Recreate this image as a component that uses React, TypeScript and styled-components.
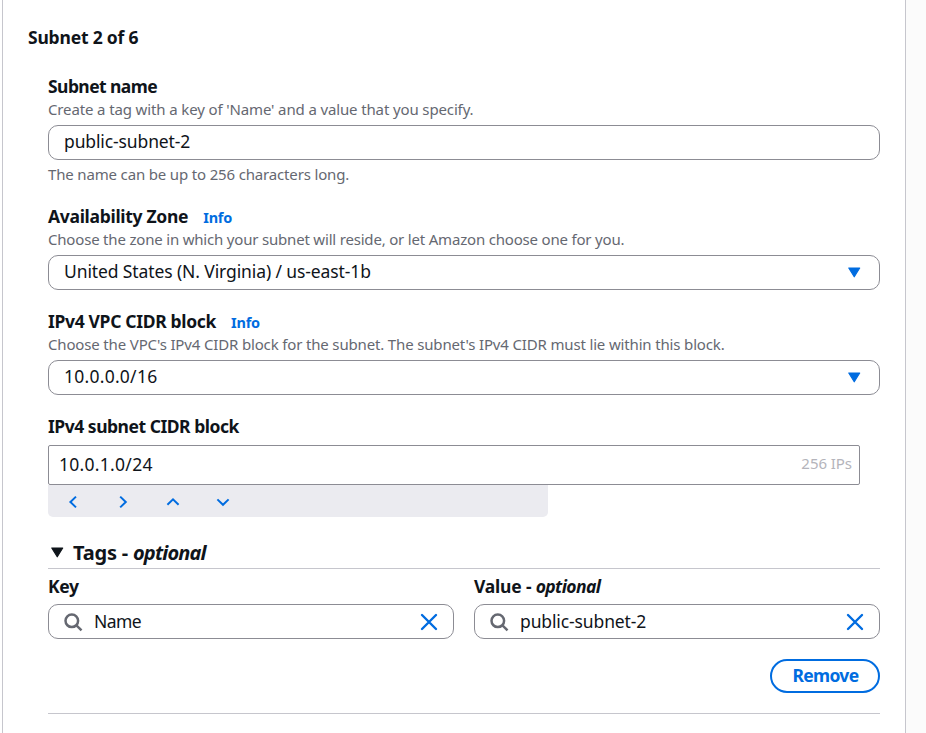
import React from 'react';
import styled, { createGlobalStyle, css } from 'styled-components';

const color = {
  text: '#0f141a',
  muted: '#656871',
  link: '#006ce0',
  control: '#8c8c94',
  divider: '#c6c6cd',
  bar: '#ebebf0',
  hint: '#b4b4bb',
};

const GlobalStyle = createGlobalStyle`
  * { box-sizing: border-box; }
  html, body { margin: 0; background: #fbfbfb; overflow: hidden; }
  body {
    font-family: "Noto Sans", "Open Sans", sans-serif;
    font-size: 17.5px;
    color: ${color.text};
  }
`;

const Panel = styled.main`
  width: 906px;
  height: 733px;
  background: #fff;
  border-right: 1px solid ${color.divider};
  padding-left: 2px;
  display: flex;
`;

const PanelBody = styled.div`
  flex: 1;
  border-left: 1px solid ${color.divider};
  padding: 25px 25px 0 25px;
`;

const Fields = styled.div`
  padding: 24px 0 0 20px;
`;

type Spaced = { $ls?: number };
const spacing = css<Spaced>`letter-spacing: ${p => p.$ls ?? 0}px;`;

const Title = styled.h2<Spaced>`
  margin: 0;
  font-size: 17.5px;
  line-height: 25px;
  font-weight: 660;
  ${spacing}
`;

const Field = styled.section<{ $gap: number }>`
  display: flex;
  flex-direction: column;
  margin-bottom: ${p => p.$gap}px;
`;

const LabelRow = styled.div`
  display: flex;
  align-items: center;
  gap: 15px;
  height: 25px;
`;

const Label = styled.label<Spaced>`
  font-weight: 660;
  line-height: 25px;
  white-space: pre;
  ${spacing}
`;

const InfoLink = styled.a`
  font-size: 14.5px;
  line-height: 20px;
  font-weight: 660;
  letter-spacing: -0.2px;
  color: ${color.link};
`;

const Help = styled.p<Spaced>`
  margin: 0;
  font-size: 15px;
  line-height: 20px;
  height: 20px;
  color: ${color.muted};
  white-space: nowrap;
  ${spacing}
`;

const Control = styled.div<Spaced & { $top?: number }>`
  display: flex;
  align-items: center;
  height: 35px;
  margin-top: ${p => p.$top ?? 6}px;
  padding: 0 15px;
  border: 1px solid ${color.control};
  border-radius: 10px;
  line-height: 25px;
  ${spacing}
`;

const ControlText = styled.span<{ $lift?: number }>`
  flex: 1;
  margin-top: -${p => p.$lift ?? 3}px;
`;

const NameHelp = styled.div`
  padding-top: 4px;
`;

const CidrInput = styled.div`
  display: flex;
  align-items: center;
  justify-content: space-between;
  width: 812px;
  height: 40px;
  margin-top: 6px;
  padding: 0 7px 2px 10px;
  border: 1px solid ${color.control};
  border-radius: 2px;
  letter-spacing: 0.28px;
`;

const IpCount = styled.span`
  font-size: 15px;
  letter-spacing: -0.05px;
  color: ${color.hint};
  margin-top: -3px;
`;

const StepBar = styled.div`
  display: flex;
  width: 500px;
  height: 32px;
  background: ${color.bar};
  border-radius: 0 0 5px 5px;
`;

const StepButton = styled.button`
  display: flex;
  align-items: center;
  justify-content: center;
  width: 50px;
  height: 33px;
  padding: 0;
  border: 0;
  background: none;
  color: ${color.link};
`;

const TagsHeader = styled.h3`
  display: flex;
  align-items: center;
  margin: 0;
  height: 34px;
  padding: 2px 0 0 3px;
  border-bottom: 1px solid ${color.divider};
  font-size: 20px;
  line-height: 25px;
  font-weight: 660;
  white-space: pre;
  letter-spacing: -0.2px;
`;

const Caret = styled.svg<{ $gap?: number }>`
  width: 13px;
  height: 11px;
  flex: none;
  margin-right: ${p => p.$gap ?? 0}px;
`;

const Optional = styled.em<Spaced>`
  font-style: italic;
  ${spacing}
`;

const TagGrid = styled.div`
  display: grid;
  grid-template-columns: 1fr 1fr;
  gap: 20px;
  padding-top: 5px;
`;

const Icon = styled.svg<{ $mr?: number }>`
  width: 20px;
  height: 20px;
  flex: none;
  fill: none;
  margin-right: ${p => p.$mr ?? 0}px;
`;

const Footer = styled.div`
  display: flex;
  justify-content: flex-end;
  padding: 20px 0;
  border-bottom: 1px solid ${color.divider};
`;

const RemoveButton = styled.button`
  width: 110px;
  height: 34px;
  padding: 0 0 1px 1px;
  border: 2px solid ${color.link};
  border-radius: 17px;
  background: #fff;
  color: ${color.link};
  font: 660 17.5px/25px "Noto Sans", sans-serif;
  letter-spacing: -0.7px;
`;

const DownCaret = ({ fill, gap }: { fill: string; gap?: number }) => (
  <Caret $gap={gap} viewBox="0 0 13 11">
    <path d="M.8 1h10.9L6.25 9.8z" fill={fill} stroke={fill} strokeWidth="1.2" strokeLinejoin="round" />
  </Caret>
);

const SearchIcon = () => (
  <Icon $mr={10} viewBox="0 0 20 20" stroke={color.muted} strokeWidth="2.5">
    <circle cx="7.8" cy="8.8" r="6.3" />
    <path d="M12.2 13.2l5.3 5.1" />
  </Icon>
);

const ClearIcon = () => (
  <Icon viewBox="0 0 20 20" stroke={color.link} strokeWidth="2.4" strokeLinecap="round">
    <path d="M4 3l14 14M18 3L4 17" />
  </Icon>
);

const steps = [
  { label: 'Previous', d: 'M13 4.6L7.4 10l5.6 5.4' },
  { label: 'Next', d: 'M7.2 4.6l5.6 5.4-5.6 5.4' },
  { label: 'Increase', d: 'M4.4 12.8L10 7.4l5.6 5.4' },
  { label: 'Decrease', d: 'M4.4 7.4L10 12.8l5.6-5.4' },
];

const SearchField = ({ value, ls }: { value: string; ls: number }) => (
  <Control $top={5} $ls={ls}>
    <SearchIcon />
    <ControlText $lift={1}>{value}</ControlText>
    <ClearIcon />
  </Control>
);

const Select = ({ value, ls }: { value: string; ls?: number }) => (
  <Control $ls={ls}>
    <ControlText>{value}</ControlText>
    <DownCaret fill={color.link} gap={3} />
  </Control>
);

export default function App() {
  return (
    <>
      <GlobalStyle />
      <Panel>
        <PanelBody>
          <Title $ls={-0.2}>Subnet 2 of 6</Title>
          <Fields>
            <Field $gap={20}>
              <LabelRow><Label $ls={-0.57}>Subnet name</Label></LabelRow>
              <Help $ls={-0.13}>Create a tag with a key of 'Name' and a value that you specify.</Help>
              <Control $ls={-0.12}><ControlText>public-subnet-2</ControlText></Control>
              <NameHelp><Help $ls={-0.16}>The name can be up to 256 characters long.</Help></NameHelp>
            </Field>
            <Field $gap={19}>
              <LabelRow><Label $ls={-0.3}>Availability Zone</Label><InfoLink>Info</InfoLink></LabelRow>
              <Help $ls={-0.19}>Choose the zone in which your subnet will reside, or let Amazon choose one for you.</Help>
              <Select value="United States (N. Virginia) / us-east-1b" ls={-0.11} />
            </Field>
            <Field $gap={19}>
              <LabelRow><Label $ls={-0.33}>IPv4 VPC CIDR block</Label><InfoLink>Info</InfoLink></LabelRow>
              <Help $ls={-0.155}>Choose the VPC's IPv4 CIDR block for the subnet. The subnet's IPv4 CIDR must lie within this block.</Help>
              <Select value="10.0.0.0/16" ls={0.25} />
            </Field>
            <Field $gap={18}>
              <LabelRow><Label $ls={-0.48}>IPv4 subnet CIDR block</Label></LabelRow>
              <CidrInput><span>10.0.1.0/24</span><IpCount>256 IPs</IpCount></CidrInput>
              <StepBar>
                {steps.map(s => (
                  <StepButton key={s.label} aria-label={s.label}>
                    <Icon viewBox="0 0 20 20" stroke="currentColor" strokeWidth="2"><path d={s.d} /></Icon>
                  </StepButton>
                ))}
              </StepBar>
            </Field>
            <TagsHeader>
              <DownCaret fill={color.text} gap={9} />
              <span>Tags - <Optional $ls={-0.85}>optional</Optional></span>
            </TagsHeader>
            <TagGrid>
              <div>
                <LabelRow><Label $ls={-0.4}>Key</Label></LabelRow>
                <SearchField value="Name" ls={-0.6} />
              </div>
              <div>
                <LabelRow><Label $ls={-0.2}>Value - <Optional $ls={-0.6}>optional</Optional></Label></LabelRow>
                <SearchField value="public-subnet-2" ls={-0.12} />
              </div>
            </TagGrid>
            <Footer><RemoveButton>Remove</RemoveButton></Footer>
          </Fields>
        </PanelBody>
      </Panel>
    </>
  );
}
